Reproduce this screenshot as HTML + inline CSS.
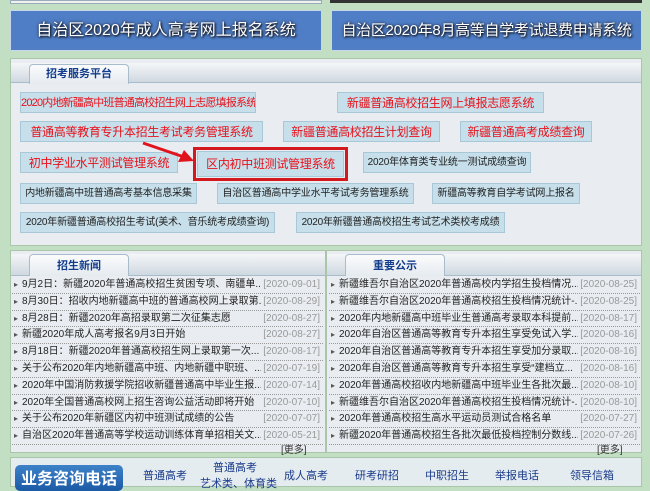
<!DOCTYPE html>
<html><head><meta charset="utf-8"><style>
*{margin:0;padding:0;box-sizing:border-box}
body{width:650px;height:487px;overflow:hidden;background:#c3dfc3;font-family:"Liberation Sans","Noto Sans CJK SC",sans-serif;position:relative}
.a{position:absolute}
.ban{background:#4f7ec6;color:#fff;font-size:16px;text-align:center;line-height:40px;text-shadow:1px 1px 2px #000,0 0 3px #223;border:1px solid #c8d6ea;white-space:nowrap;overflow:hidden}
.panel{background:#e9edf1;border:1px solid #a9c6a9}
.hdr{background:linear-gradient(#f4f6f8,#cfd8e0);border-bottom:1px solid #a9bccc}
.tab{background:linear-gradient(#fafbfc,#e6ebf0);border:1px solid #a9bccc;border-bottom:none;border-radius:4px 4px 0 0;color:#123c8c;font-size:11px;font-weight:bold;text-align:center;line-height:18px}
.b{background:#c6dfea;border:1px solid #a8c8d8;color:#e8101a;font-size:12px;height:21px;line-height:20px;text-align:center;white-space:nowrap;overflow:hidden;letter-spacing:-0.3px}
.b.s{color:#222;font-size:10px;letter-spacing:-0.2px}
.n{font-size:10px;color:#222;line-height:15.8px;white-space:nowrap}
.n div{border-bottom:1px dotted #999;position:relative;padding-left:10px}
.n div:before{content:"▸";position:absolute;left:2px;font-size:8px;color:#555}
.n span{position:absolute;right:3px;color:#999;background:#e9edf1;padding-left:2px}
.ft{font-size:11px;color:#1a3a8a;white-space:nowrap}
</style></head><body>
<div class="a" style="left:10px;top:0;width:312px;height:4px;background:#eef2ee;border:1px solid #9ab"></div>
<div class="a" style="left:330px;top:0;width:312px;height:3px;background:#333"></div>
<div class="a ban" style="left:10px;top:10px;width:312px;height:41px">自治区2020年成人高考网上报名系统</div>
<div class="a ban" style="left:331px;top:10px;width:311px;height:41px;font-size:15px;letter-spacing:-0.3px">自治区2020年8月高等自学考试退费申请系统</div>

<div class="a panel" style="left:10px;top:58px;width:632px;height:188px">
<div class="a hdr" style="left:0;top:4px;width:630px;height:20px"></div>
<div class="a tab" style="left:18px;top:5px;width:100px;height:20px">招考服务平台</div>
</div>
<div class="a b" style="left:20px;top:92px;width:236px;font-size:11px;letter-spacing:-0.8px">2020内地新疆高中班普通高校招生网上志愿填报系统</div>
<div class="a b" style="left:337px;top:92px;width:207px">新疆普通高校招生网上填报志愿系统</div>
<div class="a b" style="left:20px;top:121px;width:243px">普通高等教育专升本招生考试考务管理系统</div>
<div class="a b" style="left:283px;top:121px;width:157px">新疆普通高校招生计划查询</div>
<div class="a b" style="left:460px;top:121px;width:132px">新疆普通高考成绩查询</div>
<div class="a b" style="left:20px;top:152px;width:158px">初中学业水平测试管理系统</div>
<div class="a" style="left:193px;top:147px;width:155px;height:34px;border:3px solid #d4191e"></div>
<div class="a b" style="left:197px;top:151px;width:147px;height:26px;line-height:25px">区内初中班测试管理系统</div>
<div class="a b s" style="left:363px;top:152px;width:168px">2020年体育类专业统一测试成绩查询</div>
<div class="a b s" style="left:20px;top:183px;width:177px">内地新疆高中班普通高考基本信息采集</div>
<div class="a b s" style="left:217px;top:183px;width:197px">自治区普通高中学业水平考试考务管理系统</div>
<div class="a b s" style="left:432px;top:183px;width:148px">新疆高等教育自学考试网上报名</div>
<div class="a b s" style="left:20px;top:212px;width:255px">2020年新疆普通高校招生考试(美术、音乐统考成绩查询)</div>
<div class="a b s" style="left:296px;top:212px;width:209px">2020年新疆普通高校招生考试艺术类校考成绩</div>
<svg class="a" style="left:0;top:0" width="650" height="487"><line x1="143" y1="143" x2="184" y2="157" stroke="#e0141c" stroke-width="3"/><polygon points="194,161 178,162 184,150" fill="#e0141c"/></svg>

<div class="a panel" style="left:10px;top:250px;width:316px;height:203px"><div class="a hdr" style="left:0;top:3px;width:314px;height:22px"></div><div class="a tab" style="left:18px;top:3px;width:100px;height:22px;line-height:22px">招生新闻</div></div>
<div class="a panel" style="left:326px;top:250px;width:316px;height:203px"><div class="a hdr" style="left:0;top:3px;width:314px;height:22px"></div><div class="a tab" style="left:18px;top:3px;width:100px;height:22px;line-height:22px">重要公示</div></div>
<div class="a n" style="left:12px;top:277px;width:311px">
<div>9月2日：新疆2020年普通高校招生贫困专项、南疆单...<span>[2020-09-01]</span></div>
<div>8月30日：招收内地新疆高中班的普通高校网上录取第...<span>[2020-08-29]</span></div>
<div>8月28日：新疆2020年高招录取第二次征集志愿<span>[2020-08-27]</span></div>
<div>新疆2020年成人高考报名9月3日开始<span>[2020-08-27]</span></div>
<div>8月18日：新疆2020年普通高校招生网上录取第一次...<span>[2020-08-17]</span></div>
<div>关于公布2020年内地新疆高中班、内地新疆中职班、...<span>[2020-07-19]</span></div>
<div>2020年中国消防救援学院招收新疆普通高中毕业生报...<span>[2020-07-14]</span></div>
<div>2020年全国普通高校网上招生咨询公益活动即将开始<span>[2020-07-10]</span></div>
<div>关于公布2020年新疆区内初中班测试成绩的公告<span>[2020-07-07]</span></div>
<div>自治区2020年普通高等学校运动训练体育单招相关文...<span>[2020-05-21]</span></div>
</div>
<div class="a n" style="left:329px;top:277px;width:311px">
<div>新疆维吾尔自治区2020年普通高校内学招生投档情况...<span>[2020-08-25]</span></div>
<div>新疆维吾尔自治区2020年普通高校招生投档情况统计-...<span>[2020-08-25]</span></div>
<div>2020年内地新疆高中班毕业生普通高考录取本科提前...<span>[2020-08-17]</span></div>
<div>2020年自治区普通高等教育专升本招生享受免试入学...<span>[2020-08-16]</span></div>
<div>2020年自治区普通高等教育专升本招生享受加分录取...<span>[2020-08-16]</span></div>
<div>2020年自治区普通高等教育专升本招生享受“建档立...<span>[2020-08-16]</span></div>
<div>2020年普通高校招收内地新疆高中班毕业生各批次最...<span>[2020-08-10]</span></div>
<div>新疆维吾尔自治区2020年普通高校招生投档情况统计-...<span>[2020-08-10]</span></div>
<div>2020年普通高校招生高水平运动员测试合格名单<span>[2020-07-27]</span></div>
<div>新疆2020年普通高校招生各批次最低投档控制分数线...<span>[2020-07-26]</span></div>
</div>
<div class="a" style="left:281px;top:441px;font-size:10px;color:#333">[更多]</div>
<div class="a" style="left:597px;top:441px;font-size:10px;color:#333">[更多]</div>

<div class="a" style="left:10px;top:457px;width:632px;height:30px;background:#e4ecf0;border:1px solid #a9c6a9"></div>
<div class="a" style="left:15px;top:465px;width:108px;height:26px;background:linear-gradient(#3d82c8,#1b5aa5);border-radius:5px;color:#fff;font-size:16px;font-weight:bold;text-align:center;line-height:30px;white-space:nowrap;overflow:hidden">业务咨询电话</div>
<div class="a ft" style="left:143px;top:467px">普通高考</div>
<div class="a ft" style="left:213px;top:459px">普通高考</div>
<div class="a ft" style="left:200px;top:475px">艺术类、体育类</div>
<div class="a ft" style="left:284px;top:467px">成人高考</div>
<div class="a ft" style="left:355px;top:467px">研考研招</div>
<div class="a ft" style="left:425px;top:467px">中职招生</div>
<div class="a ft" style="left:495px;top:467px">举报电话</div>
<div class="a ft" style="left:570px;top:467px">领导信箱</div>
</body></html>
